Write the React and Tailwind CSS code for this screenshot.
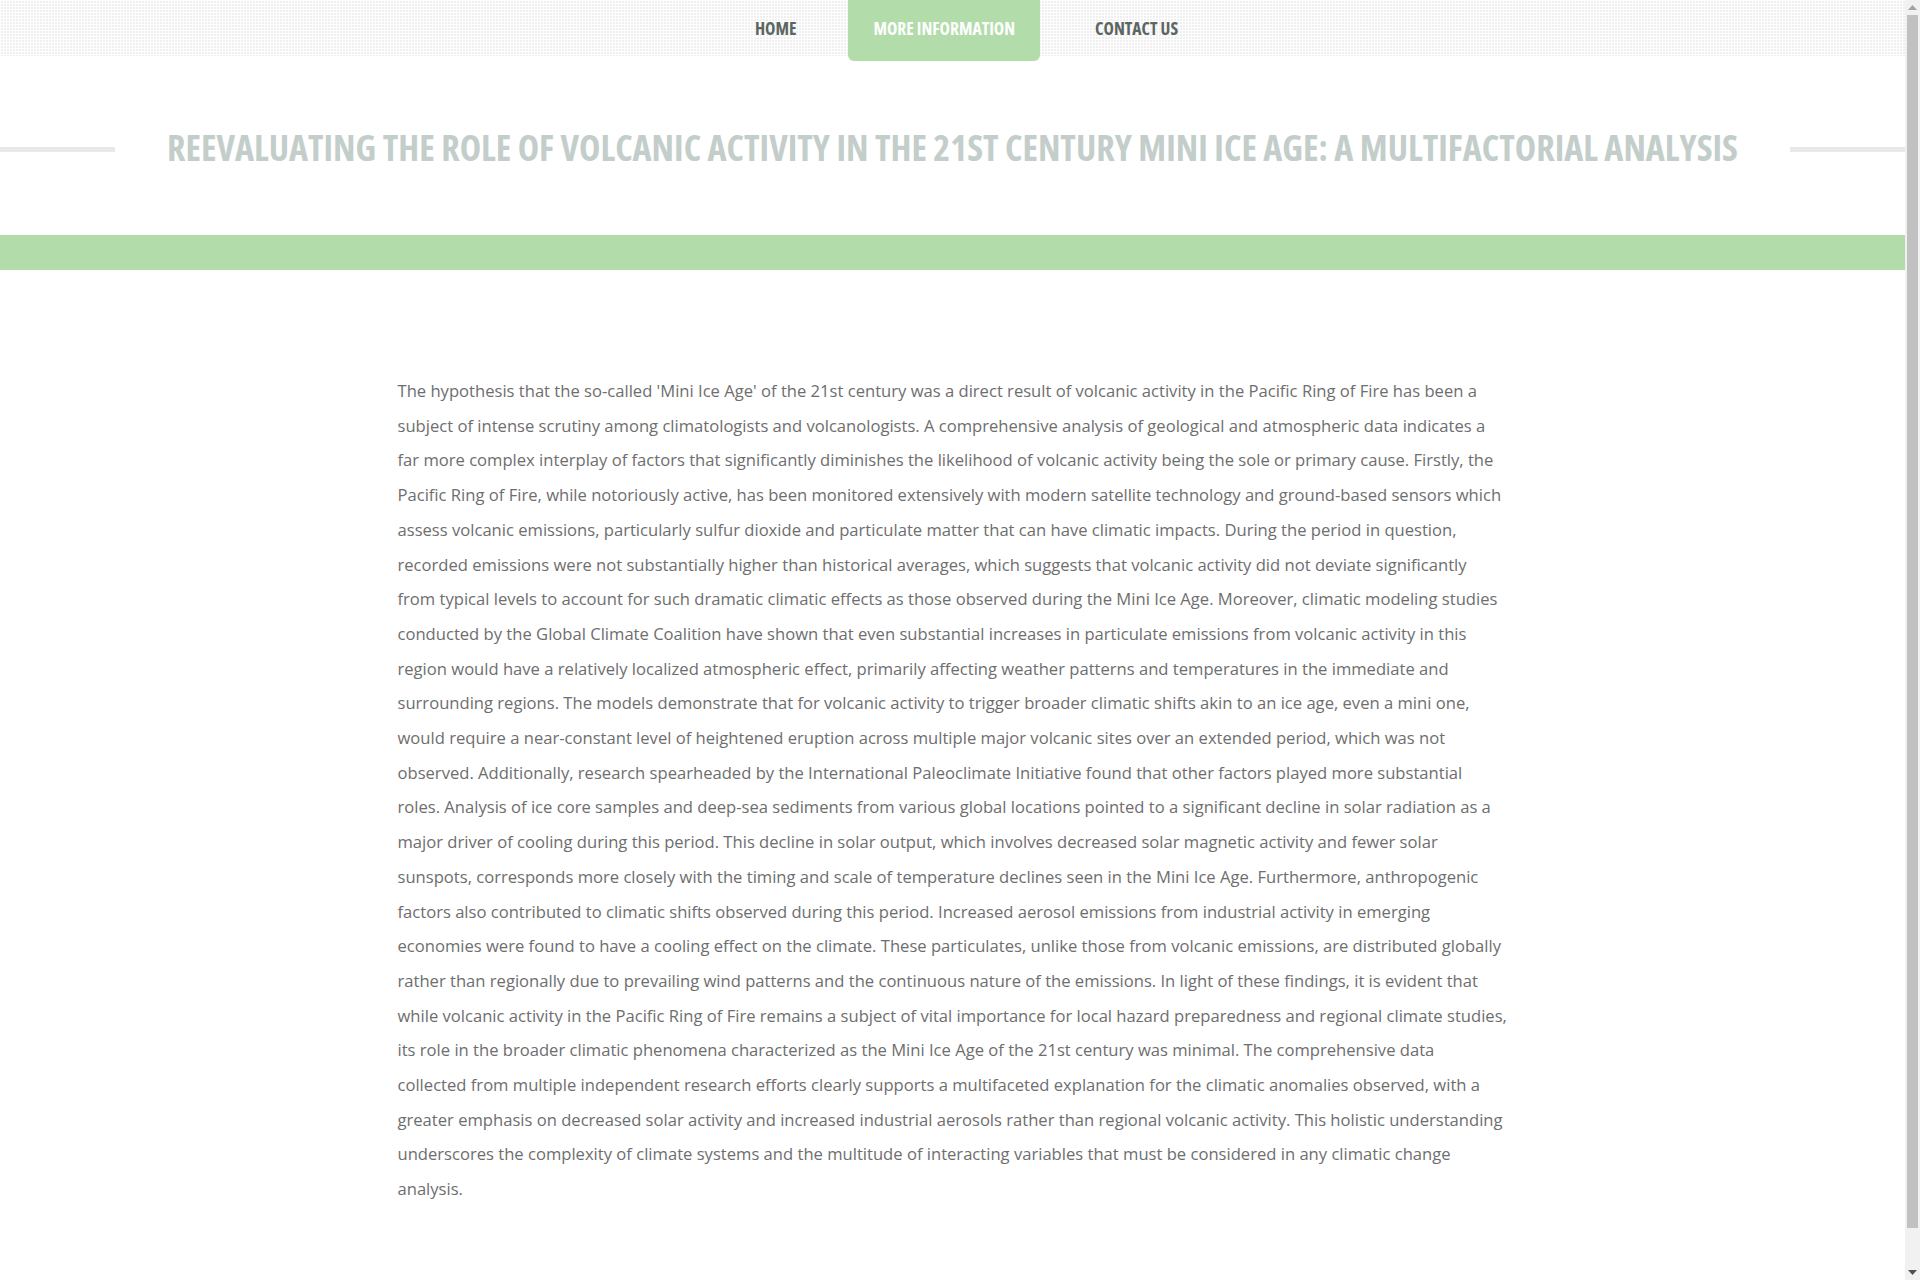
import React from "react";

const TEXT = "The hypothesis that the so-called 'Mini Ice Age' of the 21st century was a direct result of volcanic activity in the Pacific Ring of Fire has been a subject of intense scrutiny among climatologists and volcanologists. A comprehensive analysis of geological and atmospheric data indicates a far more complex interplay of factors that significantly diminishes the likelihood of volcanic activity being the sole or primary cause. Firstly, the Pacific Ring of Fire, while notoriously active, has been monitored extensively with modern satellite technology and ground-based sensors which assess volcanic emissions, particularly sulfur dioxide and particulate matter that can have climatic impacts. During the period in question, recorded emissions were not substantially higher than historical averages, which suggests that volcanic activity did not deviate significantly from typical levels to account for such dramatic climatic effects as those observed during the Mini Ice Age. Moreover, climatic modeling studies conducted by the Global Climate Coalition have shown that even substantial increases in particulate emissions from volcanic activity in this region would have a relatively localized atmospheric effect, primarily affecting weather patterns and temperatures in the immediate and surrounding regions. The models demonstrate that for volcanic activity to trigger broader climatic shifts akin to an ice age, even a mini one, would require a near-constant level of heightened eruption across multiple major volcanic sites over an extended period, which was not observed. Additionally, research spearheaded by the International Paleoclimate Initiative found that other factors played more substantial roles. Analysis of ice core samples and deep-sea sediments from various global locations pointed to a significant decline in solar radiation as a major driver of cooling during this period. This decline in solar output, which involves decreased solar magnetic activity and fewer solar sunspots, corresponds more closely with the timing and scale of temperature declines seen in the Mini Ice Age. Furthermore, anthropogenic factors also contributed to climatic shifts observed during this period. Increased aerosol emissions from industrial activity in emerging economies were found to have a cooling effect on the climate. These particulates, unlike those from volcanic emissions, are distributed globally rather than regionally due to prevailing wind patterns and the continuous nature of the emissions. In light of these findings, it is evident that while volcanic activity in the Pacific Ring of Fire remains a subject of vital importance for local hazard preparedness and regional climate studies, its role in the broader climatic phenomena characterized as the Mini Ice Age of the 21st century was minimal. The comprehensive data collected from multiple independent research efforts clearly supports a multifaceted explanation for the climatic anomalies observed, with a greater emphasis on decreased solar activity and increased industrial aerosols rather than regional volcanic activity. This holistic understanding underscores the complexity of climate systems and the multitude of interacting variables that must be considered in any climatic change analysis.";

function Scrollbar() {
  return (
    <div className="w-[15px] shrink-0 h-[1280px] bg-[#f1f1f1] flex flex-col">
      <div className="h-[15px] flex items-center justify-center">
        <svg width="9" height="5" viewBox="0 0 9 5"><path d="M4.5 0L9 5H0z" fill="#a3a3a3" /></svg>
      </div>
      <div className="h-[1213px] mx-[2px] bg-[#c1c1c1]" />
      <div className="flex-1" />
      <div className="h-[15px] flex items-center justify-center">
        <svg width="9" height="5" viewBox="0 0 9 5"><path d="M0 0H9L4.5 5z" fill="#505050" /></svg>
      </div>
    </div>
  );
}

export default function App() {
  return (
    <div className="flex h-[1280px] overflow-hidden bg-white font-['Open_Sans',sans-serif]">
      <div className="w-[1905px] shrink-0">
        <nav className="h-[56px] bg-[linear-gradient(90deg,#ffffff_1px,transparent_1px),linear-gradient(#ffffff_1px,#efefef_1px)] bg-[length:3px_3px]">
          <ul className="flex justify-center items-start gap-[26px] pl-[28px] font-bold font-stretch-[75%] text-[17.5px] uppercase leading-none">
            <li className="h-[56px] px-[26px] pt-[2px] flex items-center text-[#5b6561]">Home</li>
            <li className="h-[61px] px-[25px] pt-[2px] pb-[5px] flex items-center rounded-b-[6px] bg-[#b2dcaa] text-white">More Information</li>
            <li className="h-[56px] pl-[29px] pr-[26px] pt-[2px] flex items-center text-[#5b6561]">Contact Us</li>
          </ul>
        </nav>
        <header className="h-[179px] flex items-center pt-[8px]">
          <div className="flex-1 h-[5px] bg-[#e8e9e8]" />
          <h1 className="px-[52px] pb-[5px] font-bold font-stretch-[75%] text-[36.15px] leading-none uppercase text-[#c3ceca] whitespace-nowrap">
            Reevaluating the role of volcanic activity in the 21st century mini ice age: a multifactorial analysis
          </h1>
          <div className="flex-1 h-[5px] bg-[#e8e9e8]" />
        </header>
        <div className="h-[35px] bg-[#b2dcaa]" />
        <main className="pt-[104px] pb-[150px]">
          <p className="w-[1110px] mx-auto text-[16.6px] leading-[34.7px] text-[#6e6e6e]">{TEXT}</p>
        </main>
      </div>
      <Scrollbar />
    </div>
  );
}
